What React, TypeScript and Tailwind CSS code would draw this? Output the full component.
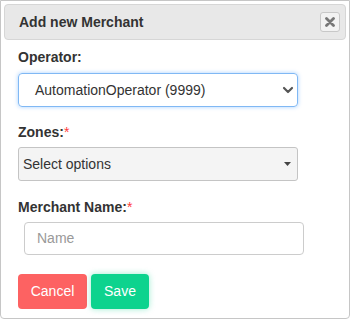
import { ChevronDown } from "lucide-react";

const font = { fontFamily: '"Liberation Sans", Arial, sans-serif' };

function Label({ text, required }: { text: string; required?: boolean }) {
  return (
    <div className="text-[14px] leading-[20px] font-bold text-[#333]">
      {text}
      {required && <span className="font-normal text-[#ff3b3b]">*</span>}
    </div>
  );
}

export default function App() {
  return (
    <div
      style={font}
      className="w-[350px] h-[319px] bg-white border border-[#c6c6c6] rounded-b-[4px] p-[3px] flex flex-col"
    >
      {/* Header */}
      <div className="h-[36px] bg-[#e8e8e8] border border-[#d6d6d6] rounded-[4px] flex items-center justify-between pl-[14px] pr-[5px]">
        <span className="text-[14px] font-bold text-[#333]">Add new Merchant</span>
        <button className="w-[20px] h-[20px] border border-[#c8c8c8] rounded-[3px] bg-[#f2f2f2] flex items-center justify-center">
          <svg width="10" height="10" viewBox="0 0 10 10">
            <path d="M1.5 1.5 L8.5 8.5 M8.5 1.5 L1.5 8.5" stroke="#777" strokeWidth="2.8" strokeLinecap="round" />
          </svg>
        </button>
      </div>

      {/* Body */}
      <div className="flex flex-col pl-[14px] pt-[7px]">
        <Label text="Operator:" />
        <div className="mt-[6px] w-[280px] h-[34px] border border-[#80b8f4] rounded-[4px] shadow-[0_0_4px_rgba(0,123,255,0.35)] flex items-center justify-between pl-[16px] pr-[1px]">
          <span className="text-[14px] text-[#333]">AutomationOperator (9999)</span>
          <ChevronDown size={16} strokeWidth={3.2} color="#555" />
        </div>

        <div className="mt-[15px]">
          <Label text="Zones:" required />
        </div>
        <div className="mt-[5px] w-[280px] h-[34px] border border-[#c4c4c4] rounded-[3px] bg-[#f4f4f4] flex items-center justify-between pl-[4px] pr-[6px]">
          <span className="text-[14px] text-[#333]">Select options</span>
          <svg width="7" height="4" viewBox="0 0 7 4">
            <path d="M0 0 H7 L3.5 4 Z" fill="#444" />
          </svg>
        </div>

        <div className="mt-[16px]">
          <Label text="Merchant Name:" required />
        </div>
        <div className="mt-[5px] ml-[6px] w-[280px] h-[33px] border border-[#cccccc] rounded-[4px] flex items-center pl-[12px]">
          <span className="text-[14px] text-[#999]">Name</span>
        </div>

        <div className="mt-[19px] flex gap-[4px]">
          <button className="h-[35px] w-[69px] rounded-[4px] bg-[#fd6262] text-white text-[14px]">Cancel</button>
          <button className="h-[35px] w-[58px] rounded-[4px] bg-[#0dd38e] text-white text-[14px] shadow-[0_0_6px_rgba(13,211,142,0.4)]">
            Save
          </button>
        </div>
      </div>
    </div>
  );
}
